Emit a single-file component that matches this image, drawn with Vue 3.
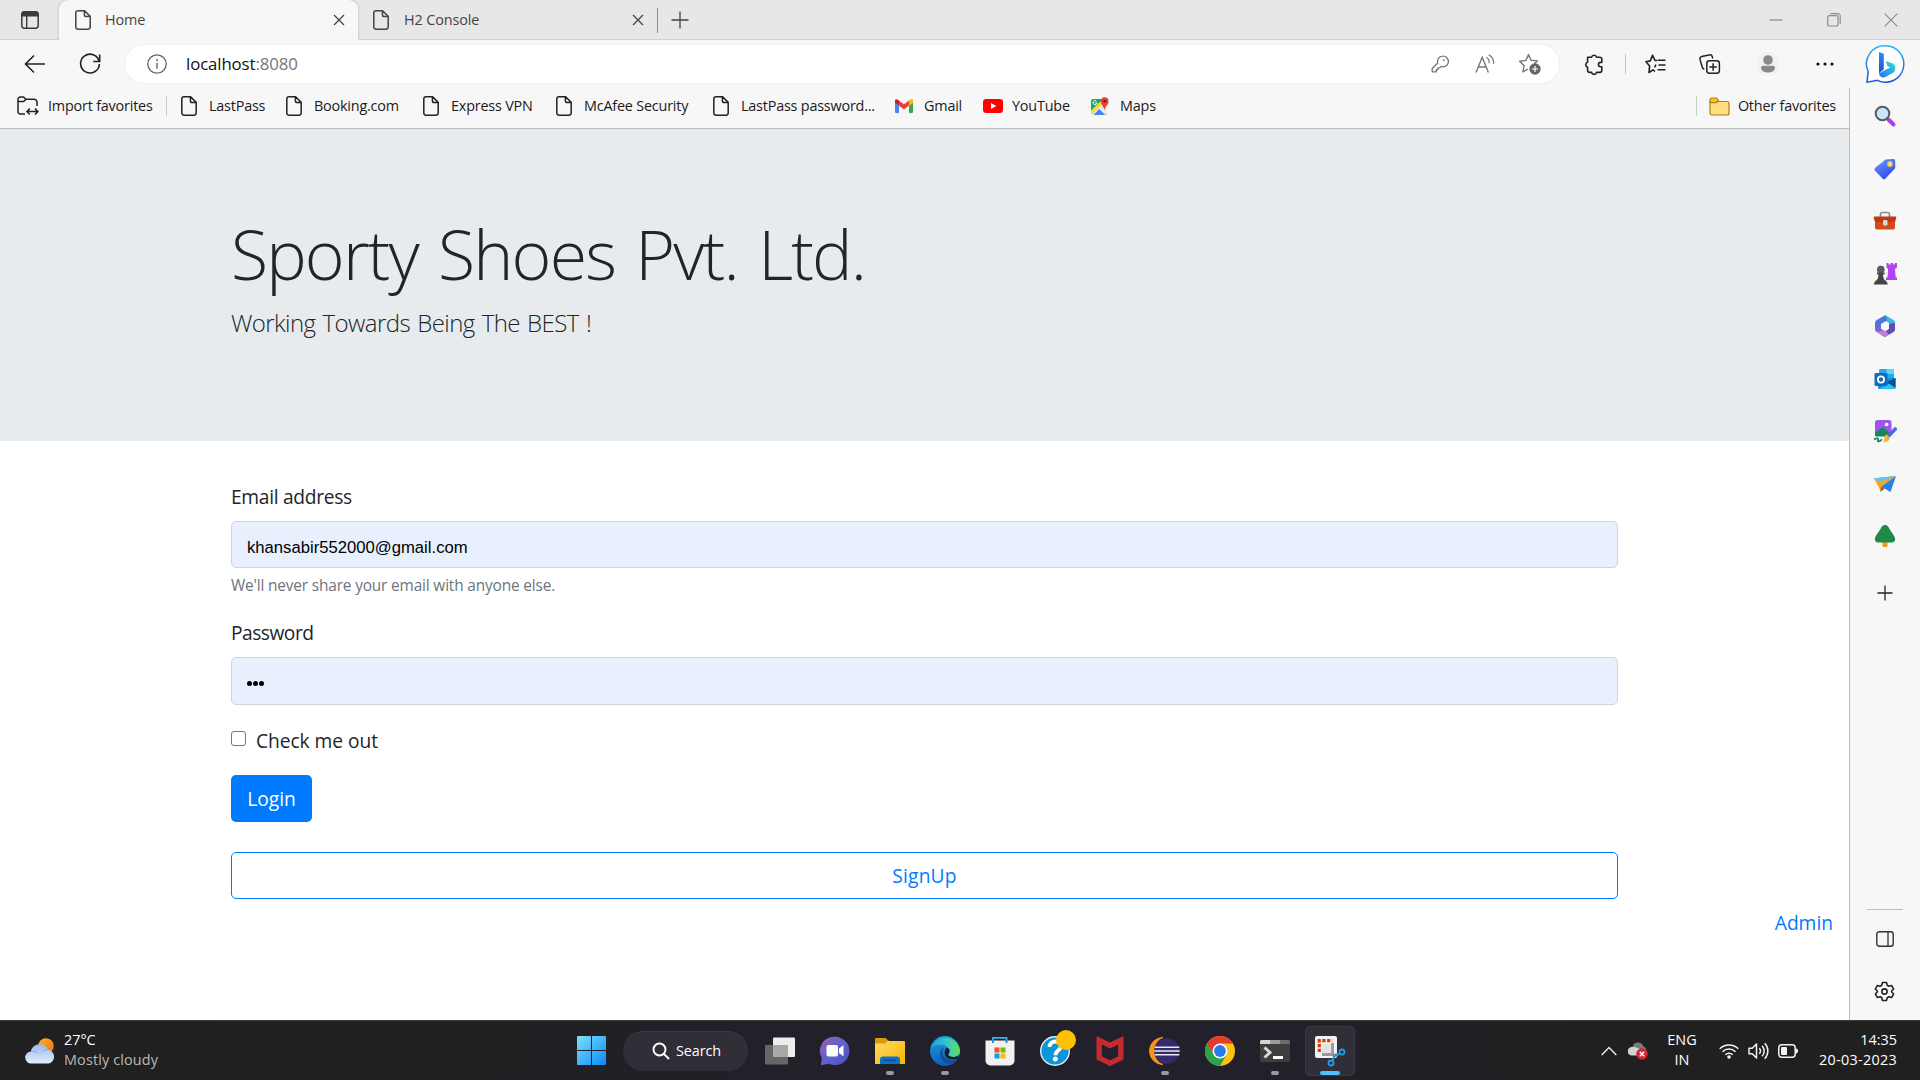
<script setup>
const bookmarks = [
  { label: 'LastPass', icon: 'page', width: 105 },
  { label: 'Booking.com', icon: 'page', width: 137 },
  { label: 'Express VPN', icon: 'page', width: 133 },
  { label: 'McAfee Security', icon: 'page', width: 157 },
  { label: 'LastPass password...', icon: 'page', width: 182 },
  { label: 'Gmail', icon: 'gmail', width: 88 },
  { label: 'YouTube', icon: 'youtube', width: 108 },
  { label: 'Maps', icon: 'maps', width: 80 },
]
</script>

<template>
  <div class="screen">
    <header class="tabstrip">
      <div class="tab-actions">
        <svg width="20" height="20" viewBox="0 0 20 20"><rect x="1.8" y="1.8" width="16.4" height="16.4" rx="2.6" fill="none" stroke="#3b3b3b" stroke-width="1.5" /><path d="M1.5 6.6V4.2a2.8 2.8 0 0 1 2.8-2.8h11.4a2.8 2.8 0 0 1 2.8 2.8v2.4z" fill="#3b3b3b" /><path d="M6.7 6v12" stroke="#3b3b3b" stroke-width="1.4" /></svg>
      </div>
      <div class="tab active">
        <svg width="16" height="20" viewBox="0 0 16 20"><path d="M3 .8h6.6L15.2 6.4V17a2.2 2.2 0 0 1-2.2 2.2H3A2.2 2.2 0 0 1 .8 17V3A2.2 2.2 0 0 1 3 .8zM9.4 1v3.8a1.8 1.8 0 0 0 1.8 1.8H15" fill="none" stroke="#444" stroke-width="1.5" /></svg>
        <span class="tab-title">Home</span>
        <svg width="12" height="12" viewBox="0 0 12 12"><path d="M1 1l10 10M11 1L1 11" stroke="#444" stroke-width="1.3" /></svg>
      </div>
      <div class="tab">
        <svg width="16" height="20" viewBox="0 0 16 20"><path d="M3 .8h6.6L15.2 6.4V17a2.2 2.2 0 0 1-2.2 2.2H3A2.2 2.2 0 0 1 .8 17V3A2.2 2.2 0 0 1 3 .8zM9.4 1v3.8a1.8 1.8 0 0 0 1.8 1.8H15" fill="none" stroke="#444" stroke-width="1.5" /></svg>
        <span class="tab-title wide">H2 Console</span>
        <svg width="12" height="12" viewBox="0 0 12 12"><path d="M1 1l10 10M11 1L1 11" stroke="#444" stroke-width="1.3" /></svg>
      </div>
      <div class="tab-sep"></div>
      <svg class="new-tab" width="18" height="18" viewBox="0 0 18 18"><path d="M9 .5v17M.5 9h17" stroke="#444" stroke-width="1.3" /></svg>
      <div class="window-controls">
        <span><svg width="14" height="14" viewBox="0 0 14 14"><path d="M.5 7h13" stroke="#8c8c8c" stroke-width="1.2" /></svg></span>
        <span><svg width="14" height="14" viewBox="0 0 14 14"><rect x=".7" y="2.7" width="10.3" height="10.3" rx="1.6" fill="none" stroke="#8c8c8c" stroke-width="1.2" /><path d="M3.4 .7h7.4a2.4 2.4 0 0 1 2.4 2.4v7.6" fill="none" stroke="#8c8c8c" stroke-width="1.2" /></svg></span>
        <span><svg width="14" height="14" viewBox="0 0 14 14"><path d="M.7.7l12.6 12.6M13.3.7L.7 13.3" stroke="#8c8c8c" stroke-width="1.1" /></svg></span>
      </div>
    </header>

    <div class="window">
      <div class="main">
        <div class="toolbar">
          <svg class="back" width="22" height="20" viewBox="0 0 22 20"><path d="M21 10H2M10 1.5L1.5 10l8.5 8.5" fill="none" stroke="#222" stroke-width="1.6" /></svg>
          <svg class="reload" width="22" height="22" viewBox="0 0 22 22"><path d="M20.2 8.6A9.4 9.4 0 1 0 20.4 11M20.7 1.5v7h-6.5" fill="none" stroke="#222" stroke-width="1.6" /></svg>
          <div class="address">
            <svg class="info" width="20" height="20" viewBox="0 0 20 20"><circle cx="10" cy="10" r="9.2" fill="none" stroke="#666" stroke-width="1.3" /><path d="M10 8.7v6" stroke="#666" stroke-width="1.4" /><circle cx="10" cy="6" r="1" fill="#666" /></svg>
            <span class="url">localhost<i>:8080</i></span>
            <div class="address-tools">
              <span><svg width="18" height="18" viewBox="0 0 18 18" fill="none" stroke="#777" stroke-width="1.3"><path d="M11.4 1.2a5.3 5.3 0 1 1-1.2 10.2L8.7 12.9H7v1.7H5.3v2.2H1.2v-3.3l5.5-5.5A5.3 5.3 0 0 1 11.4 1.2z" stroke-linejoin="round" /><circle cx="12.8" cy="5.2" r=".9" fill="#777" stroke="none" /></svg></span>
              <span><svg width="20" height="20" viewBox="0 0 20 20" fill="none" stroke="#777" stroke-width="1.4"><path d="M1 18.5L7.2 3.3l6.2 15.2M3.2 13h8" /><path d="M11.4 3.3c2 1.2 3 3.4 2.8 6M13.7.9c3.6 1.9 5.3 5.2 4.9 9" stroke-width="1.2" /></svg></span>
              <span><svg width="22" height="22" viewBox="0 0 22 22"><path d="M8.9 16.2l-5 2.6 1.2-6L.7 8.3l6.2-.9L9.5 1.5l2.6 5.7 6.4.7-3.5 3.2" fill="none" stroke="#777" stroke-width="1.4" stroke-linejoin="round" /><circle cx="16" cy="16" r="5.7" fill="#666" /><path d="M16 13v6M13 16h6" stroke="#fff" stroke-width="1.2" /></svg></span>
            </div>
          </div>
          <svg class="puzzle" width="20" height="20" viewBox="0 0 20 20"><path d="M3.6 3.2h4a2.5 2.5 0 0 1 4.9 0h3.2a2.1 2.1 0 0 1 2.1 2.1v3.1h-1.2a2.1 2.1 0 0 0 0 4.3h1.2v3.6a2.1 2.1 0 0 1-2.1 2.1h-3.2a2.5 2.5 0 0 1-4.9 0h-2a2.1 2.1 0 0 1-2-2.1v-3.1a2.6 2.6 0 0 1 0-5z" fill="none" stroke="#222" stroke-width="1.6" stroke-linejoin="round" /></svg>
          <div class="bar-sep"></div>
          <svg class="favs" width="21" height="20" viewBox="0 0 21 20" fill="none" stroke="#222" stroke-width="1.6" stroke-linejoin="round"><path d="M12 6.5H10L7.5 1.2 5.3 6.9 1 7.8l3.6 4.3L4 18.5l4-2.6 2 1.6M9.5 13.4l1.5-2.7M12.5 6.3h8M13.5 11h7M12.5 15.7h8" /></svg>
          <svg class="collections" width="22" height="20" viewBox="0 0 22 20" fill="none" stroke="#222" stroke-width="1.5"><rect x="7.8" y="6.8" width="12.6" height="12.4" rx="2.6" /><path d="M14.1 9.3v7.4M10.4 13h7.4M5.3 15.2c-1.2-.3-1.8-1-2.1-2.2L1 5.4C.7 4 1.3 3 2.6 2.6L10.3.9c1.4-.3 2.5.3 2.9 1.6l.6 2" /></svg>
          <svg class="profile" width="28" height="28" viewBox="0 0 28 28"><circle cx="14" cy="14" r="13.5" fill="#f3f3f3" stroke="#fff" /><circle cx="14" cy="10" r="4.8" fill="#8a8a8a" /><path d="M7 17.8a2 2 0 0 1 2-2h10a2 2 0 0 1 2 2c0 3-3 4.7-7 4.7s-7-1.7-7-4.7z" fill="#8a8a8a" /></svg>
          <svg class="more" width="18" height="4" viewBox="0 0 18 4" fill="#111"><circle cx="2" cy="2" r="1.6" /><circle cx="9" cy="2" r="1.6" /><circle cx="16" cy="2" r="1.6" /></svg>
        </div>

        <nav class="bookmarks">
          <svg class="import-icon" width="22" height="20" viewBox="0 0 22 20" fill="none" stroke="#222" stroke-width="1.5"><path d="M8 18H3.3A2.3 2.3 0 0 1 1 15.7V3.3A2.3 2.3 0 0 1 3.3 1H6.5l2.4 2.2L6.7 5.5H1M8.9 3.2h8.3a2.8 2.8 0 0 1 2.8 2.8V10" /><path d="M10.4 15.5h10M12.8 12.6L9.9 15.5l2.9 3M18 12.6l2.9 2.9-2.9 3" /></svg>
          <span class="import">Import favorites</span>
          <div class="bm-sep"></div>
          <div v-for="b in bookmarks" :key="b.label" class="bookmark" :class="'bm-' + b.icon" :style="{ width: b.width + 'px' }">
            <svg v-if="b.icon === 'page'" class="bm-icon" width="16" height="20" viewBox="0 0 16 20"><path d="M3 .8h6.6L15.2 6.4V17a2.2 2.2 0 0 1-2.2 2.2H3A2.2 2.2 0 0 1 .8 17V3A2.2 2.2 0 0 1 3 .8zM9.4 1v3.8a1.8 1.8 0 0 0 1.8 1.8H15" fill="none" stroke="#222" stroke-width="1.5" /></svg>
            <svg v-else-if="b.icon === 'gmail'" class="bm-icon" width="18" height="14" viewBox="0 0 18 14"><path d="M0 3.5l4 3V14H1.2A1.2 1.2 0 0 1 0 12.8z" fill="#4285f4" /><path d="M18 3.5l-4 3V14h2.8a1.2 1.2 0 0 0 1.2-1.2z" fill="#34a853" /><path d="M14 1.5l2-1.2c1-.6 2 .2 2 1.3v2.2l-4 3z" fill="#fbbc04" /><path d="M4 1.6L9 5.3l5-3.7v5L9 10.4 4 6.7z" fill="#ea4335" /><path d="M0 1.6C0 .4 1.2-.2 2.2.4L4 1.6v5.1l-4-3z" fill="#c5221f" /></svg>
            <svg v-else-if="b.icon === 'youtube'" class="bm-icon" width="20" height="14" viewBox="0 0 20 14"><rect width="20" height="14" rx="3.3" fill="#f00" /><path d="M8 4l5.3 3L8 10z" fill="#fff" /></svg>
            <svg v-else class="bm-icon" width="18" height="19" viewBox="0 0 18 19"><rect y="2" width="16" height="16" rx="2" fill="#1fa463" /><path d="M0 16L14 2.5 16 4v12.5L14 18H0z" fill="#e8eaed" /><path d="M0 13.5L11 3l2.5 2L1 17.6 0 16z" fill="#fdd835" /><path d="M2.5 18l5.7-6 6 6z" fill="#4285f4" /><path d="M5.8 5.8H4.1M5.3 4A2 2 0 1 0 6 6" fill="none" stroke="#fff" /><path d="M13.5 13.5C13.2 9.5 9.8 8 9.8 4.2a3.9 3.9 0 0 1 7.8 0c0 3.8-3.7 5.3-4.1 9.3z" fill="#ea4335" /><circle cx="13.7" cy="4.2" r="1.4" fill="#811411" /></svg>
            <span>{{ b.label }}</span>
          </div>
          <div class="other">
            <svg width="21" height="19" viewBox="0 0 21 19"><path d="M1 4.5h17a2 2 0 0 1 2 2V16a2 2 0 0 1-2 2H3a2 2 0 0 1-2-2z" fill="#ffdf80" stroke="#ad7f16" stroke-width="1.2" /><path d="M1 6V3a2 2 0 0 1 2-2h4.5l2 2.5-2 2.2H1z" fill="#fcc419" stroke="#ad7f16" stroke-width="1.2" /></svg>
            <span>Other favorites</span>
          </div>
        </nav>

        <main class="page">
          <section class="jumbotron">
            <h1>Sporty Shoes Pvt. Ltd.</h1>
            <p>Working Towards Being The BEST !</p>
          </section>
          <form class="login-form" @submit.prevent>
            <label class="label">Email address</label>
            <div class="field">khansabir552000@gmail.com</div>
            <small>We'll never share your email with anyone else.</small>
            <label class="label second">Password</label>
            <div class="field password"><span class="dots"><i></i><i></i><i></i></span></div>
            <div class="check"><span class="box"></span><label>Check me out</label></div>
            <button class="login" type="button">Login</button>
            <button class="signup" type="button">SignUp</button>
          </form>
          <a class="admin">Admin</a>
        </main>
      </div>

      <aside class="sidebar">
        <div class="bing">
          <svg width="40" height="40" viewBox="0 0 40 40">
            <defs>
              <linearGradient id="bg1" x1="0" y1="0" x2="0" y2="1"><stop offset="0" stop-color="#27b9f2" /><stop offset="1" stop-color="#1e50d8" /></linearGradient>
              <linearGradient id="bg2" x1="0" y1="0" x2="0" y2="1"><stop offset="0" stop-color="#2a8df5" /><stop offset="1" stop-color="#1c4fd6" /></linearGradient>
              <linearGradient id="bg3" x1="1" y1="0" x2="0" y2="1"><stop offset="0" stop-color="#37e3c5" /><stop offset=".5" stop-color="#2ba8ee" /><stop offset="1" stop-color="#2673e8" /></linearGradient>
            </defs>
            <path d="M20.5 1.8a18.2 18.2 0 1 1-8 34.5L2 38.2l1.2-10.5A18.2 18.2 0 0 1 20.5 1.8z" fill="#fff" stroke="url(#bg1)" stroke-width="1.5" />
            <path d="M14 8l4.8 1.8v15.5L14 29.5z" fill="url(#bg2)" />
            <path d="M14 29.5l4.7-2.7 6.4-3.4-2.5-1.2-2-5.2 7 2.4c3.5 1.4 3.7 6.8.6 9.3l-7.8 4.4c-2.5 1.3-6.4-.6-6.4-3.6z" fill="url(#bg3)" />
          </svg>
        </div>
        <div class="rail">
          <span class="tool"><svg width="22" height="22" viewBox="0 0 22 22"><path d="M14.5 14.5l5 5" stroke="#b43cf0" stroke-width="4" stroke-linecap="round" /><path d="M12 12l2.5 2.5" stroke="#777" stroke-width="2" /><circle cx="8.5" cy="8.5" r="6.8" fill="#c5e6fb" stroke="#5b5b5b" stroke-width="2" /></svg></span>
          <span class="tool"><svg width="22" height="22" viewBox="0 0 22 22"><defs><linearGradient id="tg" x1="0" y1="0" x2=".6" y2="1"><stop offset="0" stop-color="#5ea3f5" /><stop offset="1" stop-color="#3a45f0" /></linearGradient></defs><path d="M11.5 1.5L19 1a2 2 0 0 1 2.2 2.2v7L11.5 20.5a2 2 0 0 1-3 0L1 12.8a2 2 0 0 1 0-2.8z" fill="url(#tg)" /><circle cx="16" cy="6" r="2.2" fill="#e8e8ff" stroke="#f4c430" stroke-width="1.4" /></svg></span>
          <span class="tool"><svg width="24" height="20" viewBox="0 0 24 20"><path d="M7.5 6V3.5a2 2 0 0 1 2-2h5a2 2 0 0 1 2 2V6" fill="none" stroke="#8b8b8b" stroke-width="1.7" /><rect x="2" y="6" width="20" height="12.5" rx="1.8" fill="#d54b17" /><path d="M1.5 5.5h21a1 1 0 0 1 .8 1.2L22 11H2L.7 6.7a1 1 0 0 1 .8-1.2z" fill="#c03a10" /><rect x="10" y="9" width="4.5" height="5.5" rx="1" fill="#d8d8d8" /></svg></span>
          <span class="tool"><svg width="24" height="24" viewBox="0 0 24 24"><path d="M13.5 1h2v1.5h2V1H20v1.5h1.7V1H24v4.500l-2 1.500.7 8.500H24V18H13v-2.500h1.500l.6-8.500-1.600-1.500z" fill="#b540f5" /><circle cx="7.8" cy="7.5" r="3.8" fill="#5a5a5a" /><path d="M4 10.500h7.600v2H10c0 3 .8 4.500 2 6H3.500c1.300-1.500 2-3 2-6H4zM2.500 18.500H13l2 4H.5z" fill="#444" /></svg></span>
          <span class="tool"><svg width="22" height="22" viewBox="0 0 22 22"><path d="M11 0l8.500 5A2.500 2.500 0 0 1 21 7.500V13l-6-3V8L11 5.500z" fill="#39b8e8" /><path d="M11.500 0L2.800 5A3 3 0 0 0 1 8v6.500l6-1V9l6-3.500z" fill="#4a78d8" /><path d="M1 14.500A3 3 0 0 0 2.800 17l6.400 4.200L15 14.500 11 16l-4-2.500L7 9z" fill="#7d63cc" /><path d="M8 20.500l3 1.500 8.500-5a2.500 2.500 0 0 0 1.500-2.500V7.700L15 9v4.500z" fill="#5b4eb8" /><path d="M3 17l8 5 4-2.300-4-5z" fill="#c17be0" /><path d="M11 7.300l4 2v4.200L11 16l-4-2.500V9.300z" fill="#f7f7f7" /></svg></span>
          <span class="tool"><svg width="22" height="22" viewBox="0 0 22 22"><rect x="5" y="1" width="15" height="11" rx="1.2" fill="#28a8ea" /><path d="M12.500 1H19a1 1 0 0 1 1 1v4h-7.500z" fill="#50d9ff" /><path d="M4 10h17.500v9.500a1.500 1.500 0 0 1-1.500 1.500H5.500A1.500 1.500 0 0 1 4 19.500z" fill="#1490df" /><path d="M21.500 10v10L12 14.500z" fill="#0a4f92" /><path d="M5 21l10-5.500 6.500 4.500a1.500 1.500 0 0 1-1.500 1z" fill="#28c2f3" /><rect x=".5" y="5" width="13" height="13" rx="1.3" fill="#0f6cbd" /><circle cx="7" cy="11.5" r="3.1" fill="none" stroke="#fff" stroke-width="1.8" /></svg></span>
          <span class="tool"><svg width="24" height="24" viewBox="0 0 24 24"><path d="M4.500 1H16a2.500 2.500 0 0 1 2.500 2.500V17H2V3.500A2.500 2.500 0 0 1 4.500 1z" fill="#9a56ef" /><circle cx="13.7" cy="5.5" r="1.8" fill="#fff" /><path d="M2 14l6.500-5a2 2 0 0 1 2.500 0l6 5-2 3.500H4A2 2 0 0 1 2 16z" fill="#16885a" /><path d="M1 20.500c3-2.200 5-1 4 .7s2 1.700 4-.9" fill="none" stroke="#16885a" stroke-width="1.7" /><path d="M15 17.500L22.300 10" stroke="#5064f3" stroke-width="3.600" stroke-linecap="round" /><path d="M13.300 15.300l3.500 3.400c-.3 3.600-3.800 4.800-6.500 4 1.500-1.500.3-4.500 3-7.400z" fill="#f5b62c" /></svg></span>
          <span class="tool"><svg width="22" height="18" viewBox="0 0 22 18"><path d="M0 3.5L22 1 8 9.5z" fill="#4bb9f4" /><path d="M0 3.5L22 1 7 11.5v5z" fill="#f5a623" /><path d="M22 1L7 11.5l9.5 5.5z" fill="#2f7fe8" /><path d="M7 11.5L6.5 17l4.2-3.5z" fill="#a85e0a" /><path d="M0 3.2L22 1 5 7z" fill="#58c8f5" /></svg></span>
          <span class="tool"><svg width="22" height="22" viewBox="0 0 22 22"><rect x="8.5" y="15" width="5" height="7" rx="1" fill="#f29a1d" /><path d="M11 0c2.500 0 3.500 2 4.500 4s4.800 6.500 5.500 9-1 4.500-3.500 4.500h-13C2 17.500.3 15.500 1 13S5.500 6 6.500 4 8.500 0 11 0z" fill="#1f8a45" /></svg></span>
          <span class="add"><svg width="16" height="16" viewBox="0 0 16 16"><path d="M8 .5v15M.5 8h15" stroke="#222" stroke-width="1.3" /></svg></span>
          <div class="rail-foot">
            <div class="rail-sep"></div>
            <span class="foot"><svg width="18" height="16" viewBox="0 0 18 16"><rect x=".8" y=".8" width="16.4" height="14.4" rx="2.5" fill="none" stroke="#333" stroke-width="1.4" /><path d="M12 1v14" stroke="#333" stroke-width="1.3" /></svg></span>
            <span class="foot"><svg width="21" height="21" viewBox="0 0 24 24" fill="none" stroke="#222" stroke-width="1.8" stroke-linejoin="round"><circle cx="12" cy="12" r="3" /><path d="M9.600 1.800h4.800l.7 3.100 1.900 1.100 3.100-.9 2.400 4.100-2.300 2.200v1.200l2.300 2.200-2.400 4.100-3.100-.9-1.900 1.100-.7 3.100H9.600l-.7-3.100L7 18l-3.100.9-2.400-4.100 2.300-2.200v-1.200L1.500 9.200l2.400-4.100L7 6l1.900-1.100z" /></svg></span>
          </div>
        </div>
      </aside>
    </div>

    <footer class="taskbar">
      <div class="weather">
        <svg width="30" height="26" viewBox="0 0 30 26"><defs><linearGradient id="cl" x1="0" y1="0" x2="0" y2="1"><stop offset="0" stop-color="#9cb7f0" /><stop offset="1" stop-color="#e3edfb" /></linearGradient><linearGradient id="sn" x1="0" y1="0" x2="1" y2="1"><stop offset="0" stop-color="#f9b827" /><stop offset="1" stop-color="#f26a1b" /></linearGradient></defs><circle cx="21" cy="8" r="7.8" fill="url(#sn)" /><path d="M6.500 25.500a6 6 0 0 1-.6-12A9 9 0 0 1 23 11.700a7 7 0 0 1 .5 13.800z" fill="url(#cl)" /><path d="M6 13.500c3-.8 6 .5 7 2.500M17 14c1.500-2 4-2.700 6-2.300" fill="none" stroke="#7f9fe0" stroke-width=".8" /></svg>
        <div class="weather-text"><span>27°C</span><span class="dim">Mostly cloudy</span></div>
      </div>
      <div class="apps">
        <svg width="29" height="29" viewBox="0 0 29 29"><defs><linearGradient id="wn" gradientUnits="userSpaceOnUse" x1="0" y1="0" x2="29" y2="29"><stop offset="0" stop-color="#7fe0ff" /><stop offset="1" stop-color="#0a8af5" /></linearGradient></defs><path d="M1 0h13v14H0V1a1 1 0 0 1 1-1zM15 0h13a1 1 0 0 1 1 1v13H15zM0 15h14v14H1a1 1 0 0 1-1-1zM15 15h14v13a1 1 0 0 1-1 1H15z" fill="url(#wn)" /></svg>
        <div class="search">
          <svg width="18" height="18" viewBox="0 0 18 18"><circle cx="7.5" cy="7.5" r="6" fill="none" stroke="#fff" stroke-width="1.9" /><path d="M12 12l5 5" stroke="#fff" stroke-width="2" /></svg>
          <span>Search</span>
        </div>
        <div class="app"><svg width="30" height="30" viewBox="0 0 30 30"><rect x="8" y="1.5" width="22" height="19.5" rx="1" fill="#ededed" /><rect y="9" width="23" height="19.5" rx="1" fill="#666" /><path d="M8 9h15v12H8z" fill="#a9a9a9" /></svg></div>
        <div class="app"><svg width="30" height="30" viewBox="0 0 30 30"><defs><linearGradient id="ch" x1="0" y1="0" x2="1" y2="1"><stop offset="0" stop-color="#a05cae" /><stop offset=".5" stop-color="#5f62cf" /><stop offset="1" stop-color="#4c50c0" /></linearGradient></defs><path d="M15 .8a14.200 14.200 0 1 1-6 27L.8 29.200l1-7.200A14.200 14.200 0 0 1 15 .8z" fill="url(#ch)" /><rect x="6.5" y="9" width="11.5" height="11.5" rx="2" fill="#fff" /><path d="M19 12.500l4.500-3.200v10.900L19 17z" fill="#fff" /></svg></div>
        <div class="app"><svg width="30" height="28" viewBox="0 0 30 28"><defs><linearGradient id="fo" x1="0" y1="0" x2="1" y2="1"><stop offset="0" stop-color="#ffd96a" /><stop offset="1" stop-color="#f7b500" /></linearGradient></defs><path d="M0 2a1 1 0 0 1 1-1h9.500L14 4v6H0z" fill="#dd9b04" /><path d="M0 6.500h10L13 4h16a1 1 0 0 1 1 1v22H0z" fill="url(#fo)" /><path d="M5 22.500a3 3 0 0 1 3-3h14a3 3 0 0 1 3 3V27H5z" fill="#0b74c6" /><path d="M8.500 23.300h13" stroke="#0a4f8f" stroke-width="1.5" /></svg><i class="run"></i></div>
        <div class="app"><svg width="30" height="30" viewBox="0 0 30 30"><defs><linearGradient id="e1" x1="0" y1="0" x2="1" y2="0"><stop offset="0" stop-color="#1f9ee8" /><stop offset=".55" stop-color="#36c6c9" /><stop offset="1" stop-color="#63dd57" /></linearGradient><linearGradient id="e2" x1="0" y1="0" x2="0" y2="1"><stop offset="0" stop-color="#1b9de2" /><stop offset="1" stop-color="#0f5fb8" /></linearGradient></defs><circle cx="15" cy="15" r="15" fill="url(#e2)" /><path d="M.6 13A15 15 0 0 1 30 14.500c.2 4.500-3.300 6.500-6.700 6.500-3 0-5-1-5-2.200 0-.9 1.200-1.500 1.200-3.800 0-3-3.400-6.300-8.200-6.300C6 8.700 1.800 10.500.6 13z" fill="url(#e1)" /><path d="M14 11.500a7 7 0 0 0-4 7c.4 6 6 10.500 12 9 2.500-.7 4.600-2.300 6-4.200-4 2-11 1.700-14.300-3-2-3-1.700-6.500.3-8.800z" fill="#104f9c" /><path d="M19.500 15c0 2.300-1.200 2.900-1.200 3.800 0 1.200 2 2.200 5 2.200 1.900 0 3.900-.6 5.200-1.800l-.4 3.300c-4 1.600-10.500 1.600-12.800-2.800-1.300-2.700-.7-6 1.100-7.900 2.300.2 3.100 1.300 3.100 3.200z" fill="#1d1c28" /></svg><i class="run"></i></div>
        <div class="app"><svg width="30" height="30" viewBox="0 0 30 30"><path d="M8 6.500V1.800h13.500v4.700" fill="none" stroke="#35b5ee" stroke-width="1.8" /><path d="M.5 4.500h29v20a5 5 0 0 1-5 5h-19a5 5 0 0 1-5-5z" fill="#f0f0f0" /><path d="M8 7V4M21.500 7V4" stroke="#1688c8" stroke-width="1.8" /><path d="M9.500 11.500h5v5h-5z" fill="#f25022" /><path d="M15.500 11.500h5v5h-5z" fill="#7fba00" /><path d="M9.500 17.500h5v5h-5z" fill="#00a4ef" /><path d="M15.500 17.500h5v5h-5z" fill="#ffb900" /></svg></div>
        <div class="app"><svg width="40" height="40" viewBox="0 0 40 40"><circle cx="20" cy="20" r="14.3" fill="#0a96d8" stroke="#dfeff7" stroke-width="1.4" /><path d="M14.500 16c0-4 3-5.500 6-5.500s5.500 1.800 5.500 4.700c0 4.300-5.500 4-5.500 9" fill="none" stroke="#fff" stroke-width="3.800" /><circle cx="20.3" cy="28" r="2.5" fill="#fff" /><circle cx="31" cy="9" r="10" fill="#ffc000" /></svg></div>
        <div class="app"><svg width="28" height="30" viewBox="0 0 28 30"><path d="M.5 0L14 6.500 27.500 0v23.500L14 30 .5 23.500zM5.800 8.500v11.700L14 24.200l8.200-4V8.500L14 12.500z" fill="#c62a31" fill-rule="evenodd" /></svg></div>
        <div class="app"><svg width="30" height="30" viewBox="0 0 30 30"><path d="M13 1.500a13.500 13.500 0 0 0 0 27C8 27 4 21.500 4 15S8 3 13 1.500z" fill="#f7941e" stroke="#f7941e" stroke-width="1" /><circle cx="17" cy="15" r="12.7" fill="#352a6a" /><path d="M4.700 11.200h24.600M4.300 15h25.400M4.700 18.800h24.600" stroke="#e9e7f3" stroke-width="1.600" /></svg><i class="run"></i></div>
        <div class="app"><svg width="30" height="30" viewBox="0 0 30 30"><circle cx="15" cy="15" r="15" fill="#fbc116" /><path d="M2 7.500a15 15 0 0 1 26 0H15L8.500 18.700z" fill="#e33b2e" /><path d="M2 7.500a15 15 0 0 0 13 22.500L21.500 18.700h-13z" fill="#2ba24c" /><circle cx="15" cy="15" r="7.5" fill="#fff" /><circle cx="15" cy="15" r="5.9" fill="#2b78ea" /></svg></div>
        <div class="app"><svg width="30" height="24" viewBox="0 0 30 24"><rect y="1" width="30" height="22" rx="1.5" fill="#3e3e3e" /><path d="M1.500 1H10v4H0V2.500A1.500 1.500 0 0 1 1.500 1z" fill="#d3d3d3" /><path d="M10 1h10v4H10z" fill="#9c9c9c" /><path d="M20 1h8.500A1.500 1.500 0 0 1 30 2.500V5H20z" fill="#6b6b6b" /><path d="M4.500 8.500l5.500 5-5.500 5" fill="none" stroke="#d9d9d9" stroke-width="3" /><path d="M13 18.500h10" stroke="#fff" stroke-width="3" /></svg><i class="run"></i></div>
        <div class="app selected"><svg width="32" height="32" viewBox="0 0 32 32"><rect x="1" y="1" width="22" height="22" rx="2" fill="#f2f2f2" /><path d="M5.300 17V5.600h13" fill="none" stroke="#d83b01" stroke-width="3.200" stroke-dasharray="3.200 1.600" /><rect x="8" y="9" width="10" height="10" fill="#e2e2e2" /><path d="M18.500 8v13M8 19.500h12" stroke="#9a9a9a" stroke-width="2.800" /><path d="M19.500 20v2.500M19 20l6.500-1.500" stroke="#777" stroke-width="1.500" /><circle cx="28" cy="17" r="2.5" fill="none" stroke="#1d9be6" stroke-width="1.800" /><circle cx="17" cy="28" r="2.5" fill="none" stroke="#1d9be6" stroke-width="1.800" /><path d="M18.500 25.700l2-4.500 5-2" fill="none" stroke="#1d9be6" stroke-width="1.800" /></svg><i class="run on"></i></div>
      </div>
      <div class="tray">
        <svg width="16" height="10" viewBox="0 0 16 10"><path d="M.7 9L8 1.500 15.300 9" fill="none" stroke="#e8e8e8" stroke-width="1.500" /></svg>
        <svg class="cloud" width="22" height="18" viewBox="0 0 22 18"><path d="M6 3a6 6 0 0 1 10.500 1.500A4.500 4.500 0 0 1 16 13H8z" fill="#7b7b7b" /><path d="M4.500 13.500a4.300 4.300 0 0 1 0-8.500C9 4 11 7 15 8v5.500z" fill="#d2d2d2" /><circle cx="15" cy="12" r="5.800" fill="#d8222f" /><path d="M12.800 9.800l4.400 4.400M17.200 9.800l-4.400 4.400" stroke="#fff" stroke-width="1.500" /></svg>
        <div class="lang"><span>ENG</span><span>IN</span></div>
        <svg width="20" height="16" viewBox="0 0 20 16" fill="none" stroke="#f2f2f2" stroke-width="1.500"><path d="M.7 5.800a13 13 0 0 1 18.600 0M3.500 8.800a9.200 9.200 0 0 1 13 0M6.300 11.700a5.300 5.300 0 0 1 7.400 0" /><circle cx="10" cy="14" r="1.800" fill="#f2f2f2" stroke="none" /></svg>
        <svg class="vol" width="21" height="18" viewBox="0 0 21 18" fill="none" stroke="#f2f2f2" stroke-width="1.500"><path d="M1 6.200h3.200L8.500 2v14l-4.300-4.200H1z" stroke-linejoin="round" /><path d="M11.300 6.300a4 4 0 0 1 0 5.400M14 3.800a7.300 7.300 0 0 1 0 10.400M16.700 1.300a11 11 0 0 1 0 15.400" /></svg>
        <svg class="bat" width="21" height="14" viewBox="0 0 21 14"><rect x=".8" y=".8" width="16.400" height="12.400" rx="3" fill="none" stroke="#f2f2f2" stroke-width="1.500" /><rect x="3" y="3" width="6" height="8" rx="1" fill="#f2f2f2" /><path d="M18 4.500c1.500 0 2 1 2 2.500s-.5 2.500-2 2.500z" fill="#f2f2f2" /></svg>
        <div class="clock"><span>14:35</span><span class="date">20-03-2023</span></div>
      </div>
    </footer>
  </div>
</template>

<style>
body { margin: 0; overflow: hidden; }
</style>

<style scoped>
.screen { width: 1920px; height: 1080px; display: flex; flex-direction: column; overflow: hidden; font-family: "Open Sans", "Noto Sans", sans-serif; background: #f7f7f7; }
.screen svg { display: block; flex: none; overflow: visible; }

.tabstrip { height: 39px; flex: none; display: flex; background: #e7e7e7; border-bottom: 1px solid #d3d3d3; }
.tab-actions { width: 59px; display: flex; align-items: center; padding-left: 20px; box-sizing: border-box; }
.tab { width: 299px; display: flex; align-items: center; padding: 0 13px 0 15px; box-sizing: border-box; color: #444; }
.tab.active { height: 40px; background: #f7f7f7; border-radius: 9px 9px 0 0; box-shadow: 0 0 3px rgba(0, 0, 0, .22); clip-path: inset(-3px -3px 0 -3px); padding-left: 16px; }
.tab-title { flex: 1; margin-left: 14px; font-size: 14.4px; line-height: 20px; letter-spacing: -.1px; }
.tab-title.wide { margin-left: 15px; }
.tab-sep { width: 1px; height: 25px; margin-top: 8px; background: #8c8c8c; }
.new-tab { margin: 11px 0 0 12.5px; }
.window-controls { margin-left: auto; display: flex; }
.window-controls span { width: 57.5px; display: flex; align-items: center; justify-content: center; }

.window { flex: 1; min-height: 0; display: flex; }
.main { width: 1849px; display: flex; flex-direction: column; }

.toolbar { height: 48px; flex: none; display: flex; align-items: center; }
.back { margin-left: 24px; }
.reload { margin-left: 33px; }
.address { width: 1434px; height: 38px; margin-left: 24px; display: flex; align-items: center; background: #fff; border-radius: 19px; box-shadow: 0 0 3px rgba(0, 0, 0, .08); }
.info { margin-left: 22px; }
.url { margin-left: 19px; font-size: 16.8px; line-height: 24px; letter-spacing: -.1px; color: #111; }
.url i { font-style: normal; color: #767676; }
.address-tools { margin-left: auto; margin-right: 6.5px; display: flex; }
.address-tools span { width: 45px; display: flex; justify-content: center; align-items: center; }
.puzzle { margin-left: 25px; }
.bar-sep { width: 1px; height: 20px; margin-left: 21px; background: #c4c4c4; }
.favs { margin-left: 19px; }
.collections { margin-left: 33px; }
.profile { margin-left: 33px; }
.more { margin-left: 34px; }

.bookmarks { height: 36px; padding-bottom: 4px; flex: none; display: flex; align-items: center; font-size: 14.4px; line-height: 20px; letter-spacing: -.2px; color: #1b1b1b; border-bottom: 1px solid #bdbdbd; white-space: nowrap; }
.import-icon { margin-left: 17px; }
.import { margin-left: 9px; width: 118px; }
.bm-sep { width: 1px; height: 20px; background: #ccc; margin-right: 14px; }
.bookmark { display: flex; align-items: center; }
.bm-icon { margin-right: 12px; }
.bm-gmail .bm-icon, .bm-maps .bm-icon { margin-right: 11px; }
.bm-youtube .bm-icon { margin-right: 9px; }
.other { margin-left: auto; margin-right: 13px; display: flex; align-items: center; height: 20px; padding-left: 12px; border-left: 1px solid #ccc; }
.other span { margin-left: 8px; }

.page { flex: 1; background: #fff; color: #212529; display: flex; flex-direction: column; }
.jumbotron { height: 312px; flex: none; background: #e7ebee; padding: 83px 0 0 231px; box-sizing: border-box; }
.jumbotron h1 { margin: 0; font-weight: 300; font-size: 68px; line-height: 84px; letter-spacing: -1.85px; word-spacing: 4.5px; white-space: nowrap; }
.jumbotron p { margin: 9px 0 0; font-weight: 300; font-size: 24px; line-height: 36px; letter-spacing: -.58px; word-spacing: 1.5px; }
.login-form { width: 1387px; margin: 41px 0 0 231px; display: flex; flex-direction: column; align-items: flex-start; }
.label { font-size: 19.2px; line-height: 30px; letter-spacing: -.3px; margin-bottom: 9px; }
.label.second { margin-top: 20px; letter-spacing: -.5px; }
.field { width: 100%; height: 47px; box-sizing: border-box; border: 1px solid #ced4da; border-radius: 5px; background: #e8f0fe; padding: 6px 0 0 15px; display: flex; align-items: center; font: 16.667px "Liberation Sans", sans-serif; color: #000; }
.password { height: 48px; padding-top: 4px; }
.dots { display: flex; gap: 1px; }
.dots i { width: 5px; height: 5px; border-radius: 50%; background: #000; }
small { margin-top: 6px; font-size: 15.4px; line-height: 24px; letter-spacing: -.155px; color: #6c757d; }
.check { margin-top: 21px; display: flex; align-items: flex-start; font-size: 19.2px; line-height: 30px; letter-spacing: -.05px; }
.box { width: 15px; height: 15px; box-sizing: border-box; border: 1px solid #767676; border-radius: 3px; margin: 5px 10px 0 0; background: #fff; }
button { font-family: inherit; font-size: 19.2px; line-height: 30px; padding: 0; border-radius: 5px; height: 47px; }
.login { margin-top: 19px; width: 81px; background: #007bff; color: #fff; border: 0; }
.signup { margin-top: 30px; width: 100%; letter-spacing: .2px; background: #fff; color: #007bff; border: 1px solid #007bff; }
.admin { align-self: flex-end; margin: 9px 16px 0 0; font-size: 19.2px; line-height: 30px; color: #007bff; }

.sidebar { width: 71px; display: flex; flex-direction: column; background: #f7f7f7; }
.bing { height: 48px; display: flex; align-items: center; padding-left: 16px; }
.rail { flex: 1; border-left: 1px solid #bdbdbd; display: flex; flex-direction: column; padding: 2px 1px 0 0; }
.tool, .foot, .add { height: 52.5px; flex: none; display: flex; align-items: center; justify-content: center; }
.add { height: 61px; }
.rail-foot { margin-top: auto; padding-bottom: 2px; }
.rail-sep { width: 36px; height: 1px; margin: 0 auto 3px; background: #bdbdbd; }

.taskbar { height: 60px; flex: none; display: flex; background: linear-gradient(90deg, #202020 0, #212023 25%, #22202a 45%, #22202a 65%, #202020 85%); border-top: 1px solid #3a3d40; box-sizing: border-box; font-size: 14.4px; line-height: 20px; color: #fff; }
.weather { width: 577px; display: flex; }
.weather svg { margin: 17px 9px 0 25px; }
.weather-text, .lang, .clock { display: flex; flex-direction: column; margin-top: 9px; }
.dim { color: #b8b8b8; letter-spacing: .15px; }
.apps { display: flex; align-items: center; }
.search { width: 125px; height: 40px; margin: 0 6.5px 0 17px; box-sizing: border-box; border-radius: 20px; background: #302e37; border-top: 1px solid #3c3a42; display: flex; align-items: center; padding-left: 29px; }
.search span { margin-left: 6px; letter-spacing: -.1px; }
.app { position: relative; width: 50px; height: 50px; margin-right: 5px; display: flex; align-items: center; justify-content: center; }
.selected { background: #302f37; border-radius: 5px; box-shadow: inset 0 0 0 1px #3a3941; }
.run { position: absolute; left: 21px; bottom: 1px; width: 8px; height: 4px; border-radius: 2px; background: #9a9a9c; }
.run.on { left: 15px; width: 20px; background: #4cc2ff; }
.tray { flex: 1; display: flex; align-items: center; justify-content: flex-end; }
.lang { align-items: center; width: 32px; margin: 0 21px 0 17px; }
.clock { align-items: flex-end; width: 98px; margin: 9px 23px 0 0; }
.weather-text, .lang { align-self: flex-start; margin-top: 9px; }
.clock { align-self: flex-start; }
.date { letter-spacing: .28px; }
.cloud { margin-left: 10px; }
.vol { margin-left: 9px; }
.bat { margin-left: 9px; }
</style>
